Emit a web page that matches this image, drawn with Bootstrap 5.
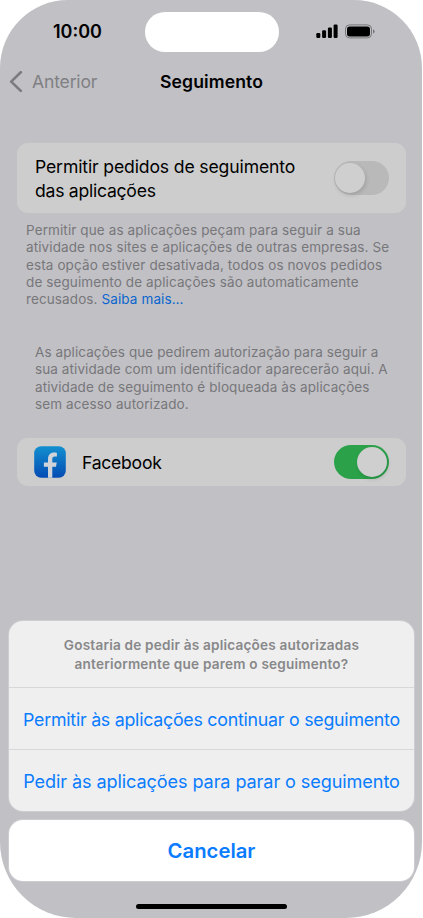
<!DOCTYPE html>
<html lang="pt">
<head>
<meta charset="utf-8">
<meta name="viewport" content="width=device-width, initial-scale=1">
<title>Seguimento</title>
<link href="https://cdn.jsdelivr.net/npm/bootstrap@5.3.0/dist/css/bootstrap.min.css" rel="stylesheet">
<style>
html, body { background: #fff; overflow: hidden; }
body { font-family: Inter, "Liberation Sans", sans-serif; color: #000; height: 918px; }
.phone { width: 422px; height: 918px; background: #c1c0c5; border-radius: 68px 68px 76px 76px; overflow: hidden; }
.line { display: block; width: max-content; white-space: nowrap; }
.status { height: 64px; }
.clock { width: 145px; padding: 22px 0 0 53px; font-size: 18px; line-height: 20px; font-weight: 600; }
.island { width: 134px; height: 40px; margin-top: 12px; border-radius: 20px; background: #fff; }
.indicators { margin: 21px 0 0 36px; }
.navrow { height: 79px; display: grid; grid-template-columns: 160px 1fr; padding-top: 7px; }
.backlink { color: #808084; font-size: 17.6px; line-height: 22px; height: 22px; letter-spacing: -.18px; }
.screen-title { font-size: 17.6px; font-weight: 600; line-height: 22px; letter-spacing: .1px; }
.group { margin: 0 16px 0 17px; background: #cdcdcd; border-radius: 11px; }
.ask-row { height: 70px; padding: 0 17px 0 18px; }
.ask-row .label { padding-top: 1px; }
.app-row { height: 48px; padding: 0 17px; }
.app-row .label { padding-top: 2px; }
.label { font-size: 17.6px; line-height: 23.8px; letter-spacing: -.14px; }
.tight { letter-spacing: -.26px; }
.note { color: #77777a; font-size: 13.5px; line-height: 17.25px; letter-spacing: .11px; }
.note a { color: #0a66cf; }
.note-ask { height: 131px; padding: 9px 0 0 26px; }
.note-apps { height: 94px; padding-left: 35px; letter-spacing: .09px; }
.toggle { width: 55px; height: 34px; border-radius: 17px; background: #b9b9ba; padding: 2px 2px 2px 1.3px; }
.toggle .knob { display: block; width: 30px; height: 30px; border-radius: 50%; background: #cfcfcf; box-shadow: 1px 2px 4px rgba(0,0,0,.14); }
.toggle.on { background: #2ba24a; }
.sheet { margin: 0 8px 0 9px; background: #efefef; border-radius: 14px; overflow: hidden; box-shadow: 0 0 0 1px rgba(255,255,255,.2); }
.prompt { height: 66px; padding-top: 15px; color: #88888a; font-size: 13.6px; font-weight: 600; line-height: 19.4px; letter-spacing: .2px; }
.choice { height: 62px; border: 0; border-top: 1px solid #d8d8da; background: none; color: #0a7cff; font-size: 17.8px; width: 100%; padding: 3px 0 0; letter-spacing: -.25px; }
.choice + .choice { font-size: 18.1px; letter-spacing: -.1px; padding-top: 2px; }
.dismiss { height: 61px; margin-top: 9px; padding-top: 2px; background: #fff; color: #0a7cff; font-size: 20.3px; font-weight: 600; }
.homebar { width: 151px; height: 5px; margin: 23px auto 9px; border-radius: 3px; background: #000; }
</style>
<script src="https://cdn.jsdelivr.net/npm/bootstrap@5.3.0/dist/js/bootstrap.bundle.min.js"></script>
</head>
<body>
<div class="phone d-flex flex-column">
  <div class="status d-flex">
    <div class="clock"><span class="line">10:00</span></div>
    <div class="island"></div>
    <svg class="indicators" width="62" height="20" viewBox="0 0 62 20">
      <rect x="1.3" y="12" width="4" height="5" rx="1.2"/><rect x="7.1" y="9.3" width="4" height="7.7" rx="1.2"/><rect x="12.9" y="6.5" width="4" height="10.5" rx="1.2"/><rect x="18.6" y="3.6" width="4" height="13.4" rx="1.2"/>
      <rect x="30.5" y="3.9" width="26" height="13" rx="4" fill="none" stroke="#77777b"/><rect x="32" y="5.4" width="23" height="10" rx="2.6"/><path d="M58 8.2q1.7.7 1.7 2.2T58 12.6z" fill="#77777b"/>
    </svg>
  </div>
  <div class="navrow">
    <div class="backlink d-flex">
      <svg width="32" height="22" viewBox="0 0 32 22"><path d="M20.8 1.3 11.2 10.6l9.600 9.300" fill="none" stroke="#7c7c80" stroke-width="2.7" stroke-linecap="round" stroke-linejoin="round"/></svg>
      <span class="line">Anterior</span>
    </div>
    <div class="screen-title"><span class="line">Seguimento</span></div>
  </div>
  <div class="group ask-row d-flex justify-content-between align-items-center">
    <div class="label"><span class="line">Permitir pedidos de seguimento</span><span class="line tight">das aplicações</span></div>
    <div class="toggle"><span class="knob"></span></div>
  </div>
  <div class="note note-ask">
    <span class="line">Permitir que as aplicações peçam para seguir a sua</span>
    <span class="line">atividade nos sites e aplicações de outras empresas. Se</span>
    <span class="line">esta opção estiver desativada, todos os novos pedidos</span>
    <span class="line">de seguimento de aplicações são automaticamente</span>
    <span class="line">recusados. <a class="text-decoration-none">Saiba mais…</a></span>
  </div>
  <div class="note note-apps">
    <span class="line">As aplicações que pedirem autorização para seguir a</span>
    <span class="line">sua atividade com um identificador aparecerão aqui. A</span>
    <span class="line">atividade de seguimento é bloqueada às aplicações</span>
    <span class="line">sem acesso autorizado.</span>
  </div>
  <div class="group app-row d-flex align-items-center">
    <svg width="32" height="32" viewBox="0 0 32 32">
      <defs><linearGradient id="fb" x2="0" y2="1"><stop stop-color="#1290cf"/><stop offset="1" stop-color="#044bb4"/></linearGradient></defs>
      <rect x=".2" y=".2" width="31.6" height="31.6" rx="7" fill="url(#fb)"/>
      <path d="M14 31.8V20.800H9.900V16.500H14V13.300C14 9 16.300 6.600 20.100 6.600C21.400 6.600 22.300 6.700 22.900 6.900V10.600H20.800C18.900 10.600 18.300 11.700 18.300 13.200V16.500H22.700L22 20.800H18.300V31.800Z" fill="#d0d4d9"/>
    </svg>
    <div class="label tight flex-fill ps-3"><span class="line">Facebook</span></div>
    <div class="toggle on d-flex justify-content-end"><span class="knob"></span></div>
  </div>
  <div class="sheet flex-shrink-0 mt-auto">
    <div class="prompt d-flex flex-column align-items-center"><span class="line">Gostaria de pedir às aplicações autorizadas</span><span class="line">anteriormente que parem o seguimento?</span></div>
    <button class="choice d-flex justify-content-center align-items-center"><span class="line">Permitir às aplicações continuar o seguimento</span></button>
    <button class="choice d-flex justify-content-center align-items-center"><span class="line">Pedir às aplicações para parar o seguimento</span></button>
  </div>
  <div class="sheet dismiss d-flex justify-content-center align-items-center flex-shrink-0"><span class="line">Cancelar</span></div>
  <div class="homebar flex-shrink-0"></div>
</div>
</body>
</html>
